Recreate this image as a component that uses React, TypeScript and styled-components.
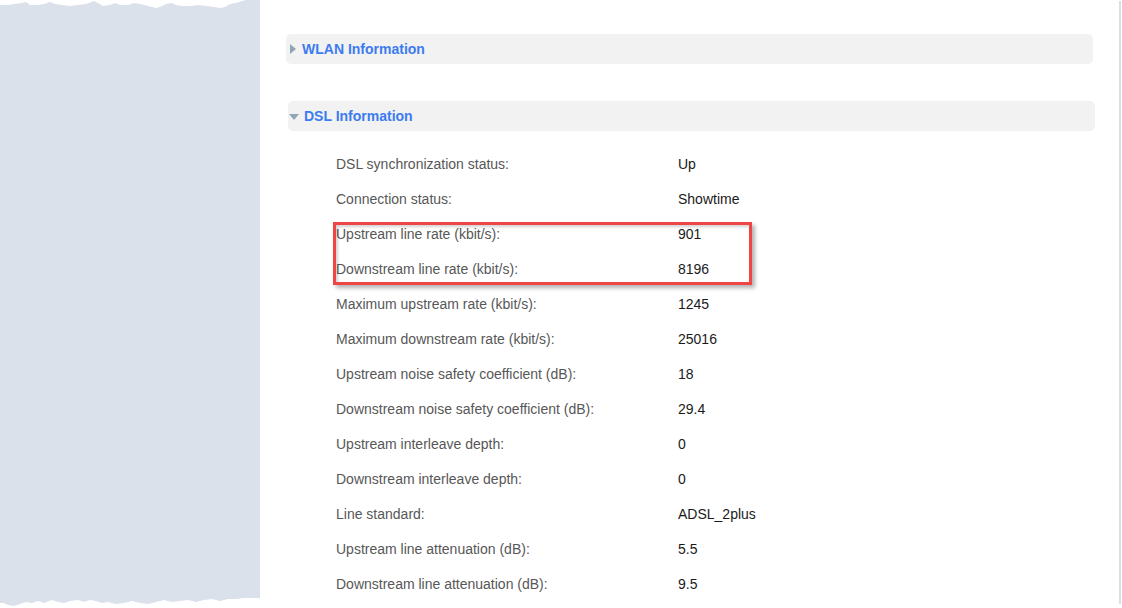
import React from 'react';
import styled, { createGlobalStyle } from 'styled-components';

const GlobalStyle = createGlobalStyle`
  html, body {
    margin: 0;
    padding: 0;
    background: #ffffff;
  }
  body {
    font-family: "Liberation Sans", Arial, sans-serif;
  }
`;

const Page = styled.div`
  display: flex;
  width: 1122px;
  height: 608px;
  overflow: hidden;
  background: #ffffff;
`;

const Sidebar = styled.aside`
  width: 260px;
  flex-shrink: 0;
  display: flex;
  flex-direction: column;
  height: 608px;
`;

const SidebarFill = styled.div`
  flex: 1;
  background: #dae1eb;
`;

const Edge = styled.svg`
  display: block;
  width: 260px;
  flex-shrink: 0;
`;

const Main = styled.main`
  width: 861px;
  height: 603px;
  margin-top: 1px;
  padding: 33px 26px 0 26px;
  box-sizing: border-box;
  border-right: 2px solid #d8dfe9;
`;

const Section = styled.section<{ shift?: number; gap?: number }>`
  margin-left: ${p => p.shift || 0}px;
  margin-right: ${p => -(p.shift || 0)}px;
  margin-top: ${p => p.gap || 0}px;
`;

const SectionHeader = styled.div`
  display: flex;
  align-items: center;
  height: 30px;
  background: #f2f2f2;
  border-radius: 5px;
  padding-left: 3px;
  gap: 6px;
`;

const Arrow = styled.span<{ open?: boolean }>`
  width: 0;
  height: 0;
  ${p => p.open ? `
    border-left: 5px solid transparent;
    border-right: 5px solid transparent;
    border-top: 6px solid #8fa7b5;
    margin-top: 2px;
    margin-left: -2px;
    margin-right: -1px;
  ` : `
    border-top: 5px solid transparent;
    border-bottom: 5px solid transparent;
    border-left: 6px solid #8fa7b5;
    margin-left: 1px;
  `}
`;

const Title = styled.span`
  font-size: 14px;
  font-weight: 700;
  color: #3c7bf0;
  padding-bottom: 1px;
`;

const Rows = styled.div`
  margin-top: 15px;
  margin-left: 48px;
`;

const Row = styled.div`
  display: grid;
  grid-template-columns: 342px 1fr;
  height: 35px;
  align-items: center;
  font-size: 14px;
`;

const Label = styled.span`
  color: #575757;
`;

const Value = styled.span`
  color: #1a1a1a;
`;

const Highlight = styled.div`
  position: relative;

  &::after {
    content: '';
    position: absolute;
    left: -3px;
    top: 6px;
    width: 419px;
    height: 63px;
    box-sizing: border-box;
    border: 3px solid #f04545;
    box-shadow: 3px 3px 4px rgba(0, 0, 0, 0.3), inset 2px 2px 3px rgba(0, 0, 0, 0.18);
    pointer-events: none;
  }
`;

const topEdge: [number, number][] = [
  [0, 5], [8, 5], [14, 4], [22, 3], [26, 2], [30, 5], [38, 5], [44, 4], [50, 2], [55, 4],
  [62, 5], [70, 6], [78, 5], [86, 4], [94, 1], [98, 3], [103, 6], [110, 5], [115, 3],
  [120, 5], [128, 5], [134, 3], [140, 4], [148, 6], [156, 8], [160, 7], [166, 4], [172, 3],
  [176, 5], [182, 6], [190, 6], [198, 5], [206, 6], [214, 7], [220, 8], [225, 7], [230, 4],
  [236, 3], [242, 1], [246, 0], [260, 0],
];

const bottomEdge: [number, number][] = [
  [0, 5], [4, 5], [8, 7], [14, 8], [20, 6], [26, 4], [32, 5], [38, 3], [44, 5], [52, 2],
  [58, 4], [64, 5], [70, 3], [78, 2], [84, 4], [90, 2], [96, 3], [102, 5], [108, 4],
  [116, 6], [124, 5], [132, 3], [140, 5], [148, 6], [156, 4], [164, 2], [172, 4],
  [180, 3], [188, 2], [196, 4], [204, 2], [212, 1], [220, 3], [228, 1], [236, 1],
  [244, 0], [260, 0],
];

const TornTop = () => (
  <Edge height={9} viewBox="0 0 260 9">
    <polygon
      fill="#dae1eb"
      points={`0,9 ${topEdge.map(([x, y]) => `${x},${y}`).join(' ')} 260,9`}
    />
  </Edge>
);

const TornBottom = () => (
  <Edge height={10} viewBox="0 0 260 10">
    <polygon
      fill="#dae1eb"
      points={`0,0 ${bottomEdge.map(([x, y]) => `${x},${y}`).join(' ')} 260,0`}
    />
  </Edge>
);

const dslRows: [string, string][] = [
  ['DSL synchronization status:', 'Up'],
  ['Connection status:', 'Showtime'],
  ['Upstream line rate (kbit/s):', '901'],
  ['Downstream line rate (kbit/s):', '8196'],
  ['Maximum upstream rate (kbit/s):', '1245'],
  ['Maximum downstream rate (kbit/s):', '25016'],
  ['Upstream noise safety coefficient (dB):', '18'],
  ['Downstream noise safety coefficient (dB):', '29.4'],
  ['Upstream interleave depth:', '0'],
  ['Downstream interleave depth:', '0'],
  ['Line standard:', 'ADSL_2plus'],
  ['Upstream line attenuation (dB):', '5.5'],
  ['Downstream line attenuation (dB):', '9.5'],
];

const InfoRow = ({ label, value }: { label: string; value: string }) => (
  <Row>
    <Label>{label}</Label>
    <Value>{value}</Value>
  </Row>
);

export default function App() {
  const before = dslRows.slice(0, 2);
  const marked = dslRows.slice(2, 4);
  const after = dslRows.slice(4);

  return (
    <>
      <GlobalStyle />
      <Page>
        <Sidebar>
          <TornTop />
          <SidebarFill />
          <TornBottom />
        </Sidebar>
        <Main>
          <Section>
            <SectionHeader>
              <Arrow />
              <Title>WLAN Information</Title>
            </SectionHeader>
          </Section>

          <Section shift={2} gap={37}>
            <SectionHeader>
              <Arrow open />
              <Title>DSL Information</Title>
            </SectionHeader>
            <Rows>
              {before.map(([l, v]) => <InfoRow key={l} label={l} value={v} />)}
              <Highlight>
                {marked.map(([l, v]) => <InfoRow key={l} label={l} value={v} />)}
              </Highlight>
              {after.map(([l, v]) => <InfoRow key={l} label={l} value={v} />)}
            </Rows>
          </Section>
        </Main>
      </Page>
    </>
  );
}
